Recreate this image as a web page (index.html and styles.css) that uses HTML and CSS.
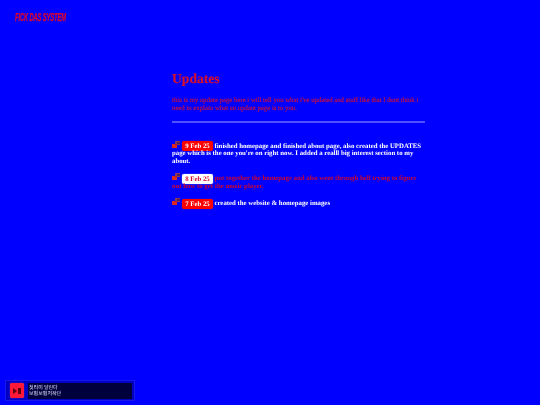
FILE: index.html
```html
<!DOCTYPE html>
<html>
<head>
<meta charset="utf-8">
<title>Updates</title>
<link rel="stylesheet" href="styles.css">
</head>
<body>
<div class="logo">FICK DAS SYSTEM</div>
<main class="content">
  <h1 class="title">Updates</h1>
  <p class="intro">this is my update page here i will tell you what i've updated and stuff like that I dont think i need to explain what an update page is to you.</p>
  <hr class="rule">
  <p class="entry first">
    <svg class="icon" viewBox="0 0 8 7"><rect x="0" y="3" width="5" height="4" fill="#e02820"/><rect x="3" y="0" width="5" height="4" fill="#8c3a58"/><rect x="5" y="1" width="3" height="2" fill="#50205c"/><rect x="3" y="3" width="2" height="1" fill="#a02028"/></svg>
    <span class="date">9 Feb 25</span> finished homepage and finished about page, also created the UPDATES page which is the one you're on right now. I added a realll big interest section to my about.
  </p>
  <p class="entry alt">
    <svg class="icon" viewBox="0 0 8 7"><rect x="0" y="3" width="5" height="4" fill="#e02820"/><rect x="3" y="0" width="5" height="4" fill="#8c3a58"/><rect x="5" y="1" width="3" height="2" fill="#50205c"/><rect x="3" y="3" width="2" height="1" fill="#a02028"/></svg>
    <span class="date">8 Feb 25</span> put together the homepage and also went through hell trying to figure out how to get the music player.
  </p>
  <p class="entry">
    <svg class="icon" viewBox="0 0 8 7"><rect x="0" y="3" width="5" height="4" fill="#e02820"/><rect x="3" y="0" width="5" height="4" fill="#8c3a58"/><rect x="5" y="1" width="3" height="2" fill="#50205c"/><rect x="3" y="3" width="2" height="1" fill="#a02028"/></svg>
    <span class="date">7 Feb 25</span> created the website &amp; homepage images
  </p>
</main>
<aside class="player">
  <button class="play"><span class="tri"></span><span class="bars"></span></button>
  <div class="track">
    <div class="song">첫리미 달린다</div>
    <div class="artist">보험보험저작단</div>
  </div>
</aside>
</body>
</html>
```

FILE: styles.css
```css
html, body { margin: 0; height: 100%; }
body {
  background: #0000ff;
  color: #ff0000;
  font-family: "Liberation Serif", "Times New Roman", serif;
  font-size: 6.8px;
  line-height: 7.7px;
  text-rendering: geometricPrecision;
  overflow: hidden;
  position: relative;
}
.logo {
  padding: 13px 0 0 15px;
  font-family: "Liberation Sans", sans-serif;
  font-size: 11.5px;
  line-height: 11px;
  font-weight: bold;
  font-style: italic;
  letter-spacing: -0.2px;
  white-space: nowrap;
  color: #e0002a;
  -webkit-text-stroke: 0.25px #e0002a;
  transform: scaleX(0.5);
  transform-origin: 15px 0;
  filter: blur(0.3px);
}
.content {
  margin: 46px 0 0 172px;
  width: 253px;
  filter: blur(0.3px);
}
.title {
  margin: 0;
  font-size: 13.6px;
  line-height: 17px;
  font-weight: bold;
  color: #d8102e;
  -webkit-text-stroke: 0.15px #d8102e;
}
.intro {
  margin: 10px 0 0;
  font-size: 6.75px;
  line-height: 7.6px;
  color: #c8103c;
  -webkit-text-stroke: 0.15px #c8103c;
}
.rule {
  margin: 8.4px 0 0;
  border: 0;
  height: 2px;
  background: #5050ff;
}
.entry {
  margin: 7.5px 0 0;
  font-weight: bold;
  color: #ffffff;
}
.entry.first { margin-top: 18px; }
.entry.alt { color: #d0002a; }
.icon { width: 8px; height: 7px; vertical-align: 0; }
.date {
  padding: 1.5px 3px 1.5px 3.5px;
  background: #ff0000;
  color: #ffffff;
  border-radius: 2px;
  box-shadow: 0 0 1px #ff3030;
}
.alt .date { background: #ffffff; color: #d0002a; box-shadow: 0 0 1px #ffffff; }
.player {
  position: absolute;
  left: 5px;
  top: 380px;
  width: 130px;
  height: 21px;
  box-sizing: border-box;
  padding: 2px 2px 2px 4px;
  display: flex;
  gap: 4px;
  align-items: center;
  background: #0000c4;
  border: 1px solid #1818e8;
}
.play {
  width: 14px;
  height: 15px;
  padding: 0;
  border: 0;
  border-radius: 2px;
  background: #ff1838;
  box-shadow: 0 0 1px #ff6080;
  display: flex;
  align-items: center;
  justify-content: center;
  gap: 1px;
}
.tri { width: 0; height: 0; border-left: 4px solid #600010; border-top: 3px solid transparent; border-bottom: 3px solid transparent; }
.bars { width: 3px; height: 6px; background: #600010; }
.track {
  flex: 1;
  height: 16px;
  box-sizing: border-box;
  padding: 2px 1px;
  background: #00003c;
  color: #e0e0ff;
  font-family: "Noto Sans CJK KR", sans-serif;
  font-size: 5px;
  line-height: 6px;
  filter: blur(0.2px);
}
```
